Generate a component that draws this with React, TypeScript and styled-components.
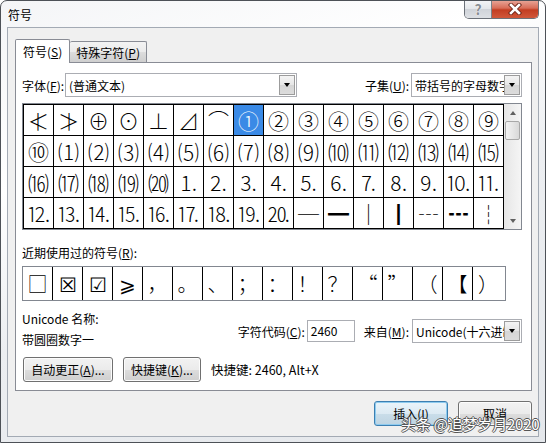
import React from 'react';
import styled, { createGlobalStyle } from 'styled-components';

const UI_FONT = `"Noto Sans CJK SC", "Noto Sans", "DejaVu Sans", sans-serif`;

const GlobalStyle = createGlobalStyle`
    html, body {
        margin: 0;
        padding: 0;
        background: #ffffff;
    }
    body {
        font-family: ${UI_FONT};
        font-size: 12px;
        color: #000;
    }
    * {
        box-sizing: border-box;
    }
`;

const Window = styled.div`
    position: relative;
    width: 546px;
    height: 443px;
    display: flex;
    flex-direction: column;
    border: 1px solid #4d5157;
    border-radius: 7px 7px 0 0;
    background: linear-gradient(160deg, #f4f5f7 0%, #ffffff 30%, #eceef1 55%, #e4e7eb 100%);
    overflow: hidden;
`;

const TitleBar = styled.div`
    height: 26px;
    display: flex;
    align-items: flex-start;
    padding-left: 7px;
`;

const Title = styled.span`
    line-height: 28px;
    font-size: 12px;
`;

const CaptionGroup = styled.div`
    margin-left: auto;
    margin-right: 6px;
    display: flex;
    height: 19px;
    margin-top: -1px;
    border: 1px solid #6b7078;
    border-top: none;
    border-radius: 0 0 5px 5px;
    overflow: hidden;
`;

const HelpButton = styled.div`
    width: 27px;
    display: flex;
    align-items: center;
    justify-content: center;
    background: linear-gradient(180deg, #f5f6f8 0%, #e3e6ea 50%, #cfd3d9 51%, #dde0e4 100%);
    border-right: 1px solid #7d8188;
    color: #8a8e94;
    font-size: 14px;
    font-weight: bold;
    text-shadow: 0 0 1px #fff, 0 0 1px #fff;
`;

const CloseButton = styled.div`
    width: 46px;
    display: flex;
    align-items: center;
    justify-content: center;
    background: linear-gradient(180deg, #e9a99c 0%, #d86d58 45%, #c23d22 55%, #d0573a 100%);
`;

const Client = styled.div`
    flex: 1;
    margin: 0 6px 5px;
    border: 1px solid #a3aab4;
    background: #f0f0f0;
    display: flex;
    flex-direction: column;
    padding: 11px 6px 0 7px;
`;

const TabStrip = styled.div`
    position: relative;
    z-index: 1;
    display: flex;
    align-items: flex-end;
    height: 24px;
    margin-bottom: -1px;
`;

const Tab = styled.div<{ $active?: boolean }>`
    height: ${(p) => (p.$active ? 24 : 21)}px;
    margin-bottom: ${(p) => (p.$active ? 0 : 1)}px;
    padding: 0 ${(p) => (p.$active ? 7 : 6)}px;
    display: flex;
    align-items: center;
    border: 1px solid #898c95;
    border-bottom: none;
    border-left: ${(p) => (p.$active ? '1px solid #898c95' : 'none')};
    border-radius: 2px 2px 0 0;
    background: ${(p) =>
        p.$active ? '#ffffff' : 'linear-gradient(180deg, #f3f3f3 0%, #ebebeb 50%, #dddddd 51%, #cfcfcf 100%)'};
    padding-top: ${(p) => (p.$active ? 0 : 1)}px;
`;

const Panel = styled.div`
    border: 1px solid #898c95;
    background: #ffffff;
    padding: 10px 9px 8px 6px;
    display: flex;
    flex-direction: column;
`;

const FontRow = styled.div`
    height: 24px;
    display: flex;
    align-items: center;
    justify-content: space-between;
`;

const FieldGroup = styled.div`
    display: flex;
    align-items: center;
`;

const Label = styled.span<{ $w?: number }>`
    width: ${(p) => (p.$w ? `${p.$w}px` : 'auto')};
    white-space: nowrap;
`;

const Combo = styled.div<{ $w: number }>`
    width: ${(p) => p.$w}px;
    height: 24px;
    border: 1px solid #abadb3;
    background: #ffffff;
    display: flex;
    align-items: center;
    padding-left: 3px;
    overflow: hidden;
`;

const ComboText = styled.span`
    flex: 1;
    overflow: hidden;
    white-space: nowrap;
`;

const DropButton = styled.span`
    flex: none;
    width: 16px;
    height: 20px;
    margin-right: 1px;
    border: 1px solid #9c9c9c;
    background: linear-gradient(180deg, #f4f4f4 0%, #e6e6e6 50%, #d6d6d6 51%, #dcdcdc 100%);
    display: flex;
    align-items: center;
    justify-content: center;
`;

const Arrow = styled.span<{ $up?: boolean; $color?: string }>`
    width: 0;
    height: 0;
    border-left: 3.5px solid transparent;
    border-right: 3.5px solid transparent;
    border-top: ${(p) => (p.$up ? 'none' : `4px solid ${p.$color || '#000'}`)};
    border-bottom: ${(p) => (p.$up ? `4px solid ${p.$color || '#000'}` : 'none')};
`;

const GridFrame = styled.div`
    margin-top: 6px;
    width: 500px;
    display: flex;
    border: 1px solid #828790;
`;

const SymbolGrid = styled.div`
    display: grid;
    grid-template-columns: repeat(16, 29px);
    grid-auto-rows: 30px;
    gap: 1px;
    padding: 1px;
    background: #000;
`;

const Cell = styled.div<{ $selected?: boolean }>`
    display: flex;
    align-items: center;
    justify-content: center;
    background: ${(p) => (p.$selected ? '#3a8ae6' : '#ffffff')};
    color: ${(p) => (p.$selected ? '#ffffff' : '#000')};
    font-family: "Noto Sans CJK SC", "DejaVu Sans", sans-serif;
    font-size: 21px;
    font-weight: 300;
    line-height: 1;
    white-space: nowrap;
`;

const ScrollBar = styled.div`
    width: 17px;
    display: flex;
    flex-direction: column;
    background: linear-gradient(90deg, #e6e6e6 0%, #f5f5f5 100%);
`;

const ScrollArrow = styled.div`
    height: 17px;
    display: flex;
    align-items: center;
    justify-content: center;
`;

const ScrollThumb = styled.div`
    height: 19px;
    margin: 0 1px;
    border: 1px solid #a8a8a8;
    border-radius: 2px;
    background: linear-gradient(90deg, #f3f3f3 0%, #e6e6e6 50%, #d8d8d8 100%);
`;

const ScrollTrack = styled.div`
    flex: 1;
`;

const SectionLabel = styled.div`
    margin-top: 15px;
    line-height: 16px;
`;

const RecentBox = styled.div`
    margin-top: 5px;
    width: 484px;
    height: 35px;
    border: 1px solid #828790;
    display: flex;
    background: #ffffff;
`;

const RecentCell = styled.div<{ $last?: boolean }>`
    width: 30px;
    height: 33px;
    border-right: ${(p) => (p.$last ? 'none' : '1px solid #000')};
    display: flex;
    align-items: center;
    justify-content: center;
    font-family: "Noto Sans CJK SC", "DejaVu Sans", sans-serif;
    font-size: 20px;
    font-weight: 300;
    line-height: 1;
`;

const InfoRow = styled.div`
    margin-top: 7px;
    display: flex;
    justify-content: space-between;
    align-items: flex-start;
`;

const InfoText = styled.div`
    line-height: 21px;
`;

const CodeGroup = styled.div`
    margin-top: 11px;
    display: flex;
    align-items: center;
`;

const CodeInput = styled.div`
    width: 48px;
    height: 22px;
    margin: 0 9px 0 2px;
    border: 1px solid #abadb3;
    background: #ffffff;
    padding-left: 3px;
    line-height: 20px;
`;

const ButtonRow = styled.div`
    margin-top: 7px;
    padding-left: 1px;
    display: flex;
    align-items: center;
    gap: 10px;
`;

const Button = styled.button<{ $w: number; $default?: boolean }>`
    width: ${(p) => p.$w}px;
    height: 25px;
    padding: 0;
    font-family: ${UI_FONT};
    font-size: 12px;
    color: #000;
    border: 1px solid ${(p) => (p.$default ? '#3c7fb1' : '#707070')};
    border-radius: 3px;
    background: ${(p) =>
        p.$default
            ? 'linear-gradient(180deg, #eaf4fa 0%, #dceaf3 50%, #c9dde9 51%, #bed4e2 100%)'
            : 'linear-gradient(180deg, #f2f2f2 0%, #ebebeb 50%, #dddddd 51%, #cfcfcf 100%)'};
    box-shadow: inset 0 0 0 1px ${(p) => (p.$default ? '#8ecbef' : '#fcfcfc')};
`;

const ShortcutText = styled.span`
    font-size: 12.5px;
`;

const Footer = styled.div`
    margin-top: 10px;
    display: flex;
    justify-content: flex-end;
    gap: 10px;
`;

const Watermark = styled.div`
    position: absolute;
    left: 400px;
    top: 414px;
    font-family: ${UI_FONT};
    font-size: 15px;
    line-height: 18px;
    letter-spacing: -0.2px;
    color: #ffffff;
    white-space: nowrap;
    text-shadow: 1px 0 0 #555, -1px 0 0 #555, 0 1px 0 #555, 0 -1px 0 #555;
`;

const GRID = [
    '≮≯⊕⊙⊥⊿⌒①②③④⑤⑥⑦⑧⑨',
    '⑩⑴⑵⑶⑷⑸⑹⑺⑻⑼⑽⑾⑿⒀⒁⒂',
    '⒃⒄⒅⒆⒇⒈⒉⒊⒋⒌⒍⒎⒏⒐⒑⒒',
    '⒓⒔⒕⒖⒗⒘⒙⒚⒛─━│┃┄┅┆',
];

const RECENT = ['□', '☒', '☑', '⩾', '，', '。', '、', '；', '：', '！', '？', '“', '”', '（', '【', '）'];

const CloseIcon = () => (
    <svg width="14" height="12" viewBox="0 0 14 12">
        <path d="M3 2 L11 10 M11 2 L3 10" stroke="#6b2418" strokeWidth="4.4" strokeLinecap="square" />
        <path d="M3 2 L11 10 M11 2 L3 10" stroke="#ffffff" strokeWidth="2.6" strokeLinecap="square" />
    </svg>
);

const App: React.FC = () => {
    return (
        <>
            <GlobalStyle />
            <Window>
                <TitleBar>
                    <Title>符号</Title>
                    <CaptionGroup>
                        <HelpButton>?</HelpButton>
                        <CloseButton>
                            <CloseIcon />
                        </CloseButton>
                    </CaptionGroup>
                </TitleBar>
                <Client>
                    <TabStrip>
                        <Tab $active>
                            符号(<u>S</u>)
                        </Tab>
                        <Tab>
                            特殊字符(<u>P</u>)
                        </Tab>
                    </TabStrip>
                    <Panel>
                        <FontRow>
                            <FieldGroup>
                                <Label $w={43}>
                                    字体(<u>F</u>):
                                </Label>
                                <Combo $w={232}>
                                    <ComboText>(普通文本)</ComboText>
                                    <DropButton>
                                        <Arrow />
                                    </DropButton>
                                </Combo>
                            </FieldGroup>
                            <FieldGroup>
                                <Label $w={46}>
                                    子集(<u>U</u>):
                                </Label>
                                <Combo $w={111}>
                                    <ComboText>带括号的字母数字</ComboText>
                                    <DropButton>
                                        <Arrow />
                                    </DropButton>
                                </Combo>
                            </FieldGroup>
                        </FontRow>
                        <GridFrame>
                            <SymbolGrid>
                                {GRID.map((row, r) =>
                                    Array.from(row).map((ch, c) => (
                                        <Cell key={`${r}-${c}`} $selected={r === 0 && c === 7}>
                                            {ch}
                                        </Cell>
                                    ))
                                )}
                            </SymbolGrid>
                            <ScrollBar>
                                <ScrollArrow>
                                    <Arrow $up $color='#606060' />
                                </ScrollArrow>
                                <ScrollThumb />
                                <ScrollTrack />
                                <ScrollArrow>
                                    <Arrow $color='#606060' />
                                </ScrollArrow>
                            </ScrollBar>
                        </GridFrame>
                        <SectionLabel>
                            近期使用过的符号(<u>R</u>):
                        </SectionLabel>
                        <RecentBox>
                            {RECENT.map((ch, i) => (
                                <RecentCell key={i} $last={i === RECENT.length - 1}>
                                    {ch}
                                </RecentCell>
                            ))}
                        </RecentBox>
                        <InfoRow>
                            <div>
                                <InfoText>Unicode 名称:</InfoText>
                                <InfoText>带圆圈数字一</InfoText>
                            </div>
                            <CodeGroup>
                                <Label>
                                    字符代码(<u>C</u>):
                                </Label>
                                <CodeInput>2460</CodeInput>
                                <Label>
                                    来自(<u>M</u>):
                                </Label>
                                <Combo $w={110} style={{ marginLeft: 3 }}>
                                    <ComboText>Unicode(十六进制)</ComboText>
                                    <DropButton>
                                        <Arrow />
                                    </DropButton>
                                </Combo>
                            </CodeGroup>
                        </InfoRow>
                        <ButtonRow>
                            <Button $w={90}>
                                自动更正(<u>A</u>)...
                            </Button>
                            <Button $w={78}>
                                快捷键(<u>K</u>)...
                            </Button>
                            <ShortcutText>快捷键: 2460, Alt+X</ShortcutText>
                        </ButtonRow>
                    </Panel>
                    <Footer>
                        <Button $w={74} $default>
                            插入(<u>I</u>)
                        </Button>
                        <Button $w={74}>取消</Button>
                    </Footer>
                </Client>
                <Watermark>头条 @追梦岁月2020</Watermark>
            </Window>
        </>
    );
};

export default App;
